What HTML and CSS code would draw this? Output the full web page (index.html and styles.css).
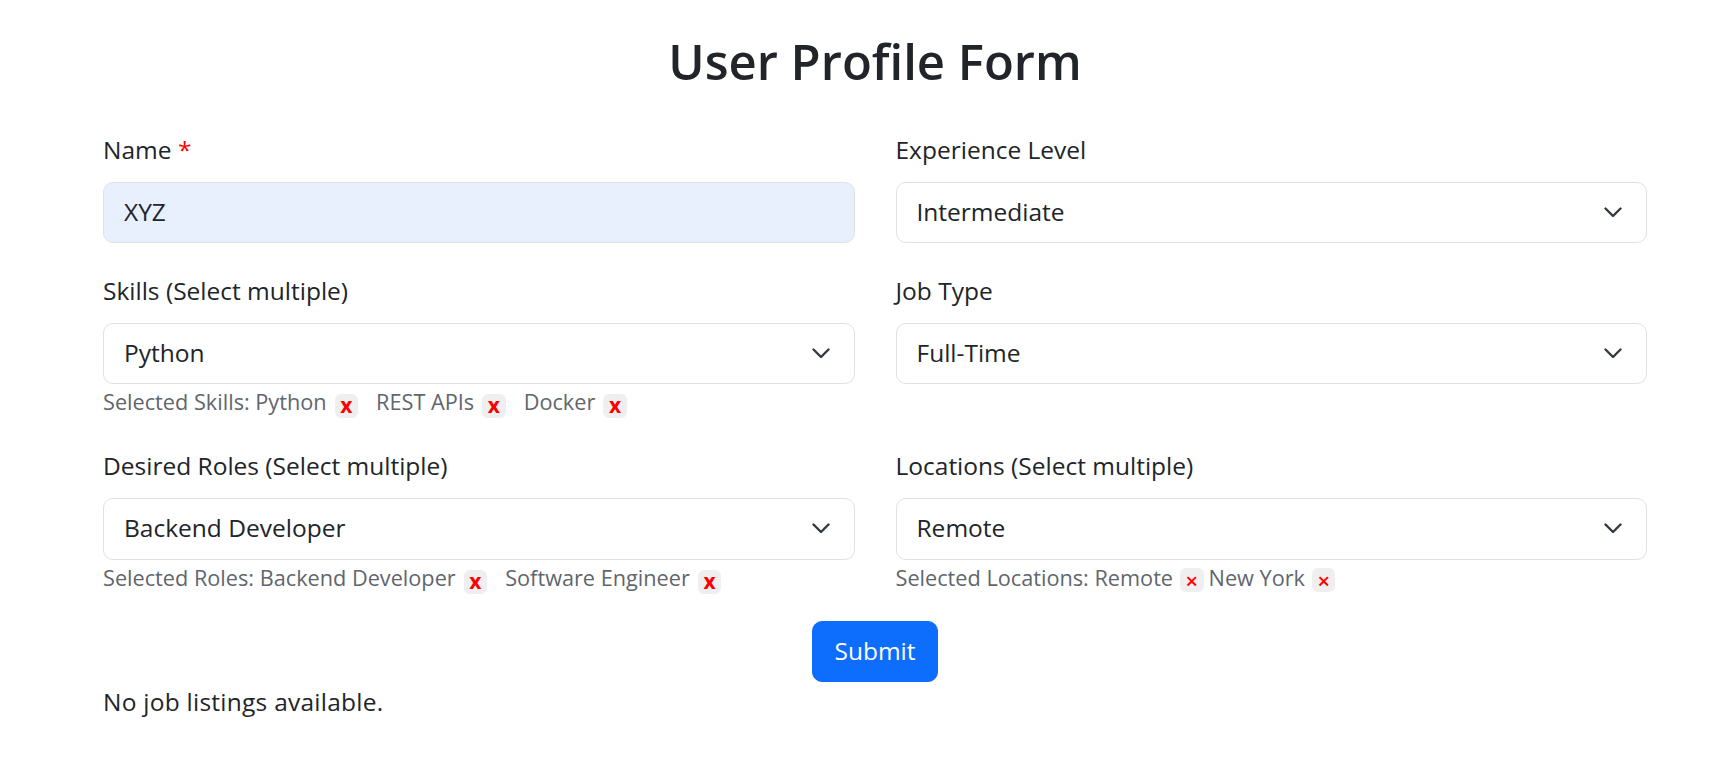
FILE: index.html
```html
<!DOCTYPE html>
<html lang="en">
<head>
<meta charset="utf-8">
<title>User Profile Form</title>
<link rel="stylesheet" href="styles.css">
</head>
<body>
<main class="page">
  <h1 class="title">User Profile Form</h1>
  <form class="form">
    <div class="grid">
      <div class="field">
        <label class="label">Name <span class="req">*</span></label>
        <div class="control filled">XYZ</div>
      </div>
      <div class="field">
        <label class="label">Experience Level</label>
        <div class="control select"><span>Intermediate</span><svg class="chev" width="18" height="11" viewBox="0 0 18 11"><path d="M1.5 1.5 L9 9 L16.5 1.5" fill="none" stroke="#343a40" stroke-width="2.4" stroke-linecap="round" stroke-linejoin="round"/></svg></div>
      </div>
      <div class="field">
        <label class="label">Skills (Select multiple)</label>
        <div class="control select"><span>Python</span><svg class="chev" width="18" height="11" viewBox="0 0 18 11"><path d="M1.5 1.5 L9 9 L16.5 1.5" fill="none" stroke="#343a40" stroke-width="2.4" stroke-linecap="round" stroke-linejoin="round"/></svg></div>
        <div class="help">Selected Skills: <span class="tag">Python<span class="x">x</span></span><span class="tag">REST APIs<span class="x">x</span></span><span class="tag">Docker<span class="x">x</span></span></div>
      </div>
      <div class="field">
        <label class="label">Job Type</label>
        <div class="control select"><span>Full-Time</span><svg class="chev" width="18" height="11" viewBox="0 0 18 11"><path d="M1.5 1.5 L9 9 L16.5 1.5" fill="none" stroke="#343a40" stroke-width="2.4" stroke-linecap="round" stroke-linejoin="round"/></svg></div>
      </div>
      <div class="field">
        <label class="label">Desired Roles (Select multiple)</label>
        <div class="control select"><span>Backend Developer</span><svg class="chev" width="18" height="11" viewBox="0 0 18 11"><path d="M1.5 1.5 L9 9 L16.5 1.5" fill="none" stroke="#343a40" stroke-width="2.4" stroke-linecap="round" stroke-linejoin="round"/></svg></div>
        <div class="help">Selected Roles: <span class="tag">Backend Developer<span class="x">x</span></span><span class="tag">Software Engineer<span class="x">x</span></span></div>
      </div>
      <div class="field">
        <label class="label">Locations (Select multiple)</label>
        <div class="control select"><span>Remote</span><svg class="chev" width="18" height="11" viewBox="0 0 18 11"><path d="M1.5 1.5 L9 9 L16.5 1.5" fill="none" stroke="#343a40" stroke-width="2.4" stroke-linecap="round" stroke-linejoin="round"/></svg></div>
        <div class="help">Selected Locations: <span class="tag loc">Remote<span class="x thin">×</span></span><span class="tag loc">New York<span class="x thin">×</span></span></div>
      </div>
    </div>
    <div class="actions"><button type="button" class="btn">Submit</button></div>
  </form>
  <p class="empty">No job listings available.</p>
</main>
</body>
</html>
```
FILE: styles.css
```css
* { box-sizing: border-box; }
html, body { margin: 0; padding: 0; background: #fff; }
body {
  font-family: "Open Sans", "Noto Sans", sans-serif;
  color: #212529;
  font-size: 24.5px;
  line-height: 1.5;
}
.page {
  padding: 32px 79px 0 103px;
}
.title {
  margin: 0 0 41px;
  font-size: 49px;
  font-weight: 600;
  line-height: 1.2;
  text-align: center;
  color: #212529;
}
.grid {
  display: grid;
  grid-template-columns: 1fr 1fr;
  column-gap: 41px;
  row-gap: 30px;
  align-items: start;
}
.field { display: flex; flex-direction: column; }
.label {
  display: block;
  margin-bottom: 13px;
  font-size: 24.5px;
  line-height: 1.5;
}
.req { color: #ff0000; }
.control {
  height: 61.5px;
  border: 1px solid #dee2e6;
  border-radius: 10px;
  padding: 0 20px;
  display: flex;
  align-items: center;
  font-size: 24.5px;
  color: #212529;
  background: #fff;
}
.control.filled { background: #e8f0fe; }
.select { justify-content: space-between; padding-right: 24px; }
.chev { display: block; flex: none; }
.help {
  margin-top: 2px;
  font-size: 21.7px;
  line-height: 32px;
  color: #5f666d;
  white-space: nowrap;
}
.tag { display: inline-block; margin-right: 18px; }
.tag.loc { margin-right: 5px; }
.x {
  display: inline-block;
  margin-left: 8px;
  width: 23.5px;
  height: 24px;
  line-height: 22px;
  text-align: center;
  background: #efefef;
  border-radius: 6px;
  color: #ff0000;
  font-weight: 700;
  font-size: 21px;
  vertical-align: -3px;
}
.x.thin { font-weight: 600; font-size: 22px; margin-left: 7px; line-height: 24px; }
.actions { display: flex; justify-content: center; margin-top: 27.5px; }
.btn {
  font-family: inherit;
  font-size: 24.5px;
  line-height: 1.5;
  padding: 11px 21px;
  color: #fff;
  background: #0d6efd;
  border: 1px solid #0d6efd;
  border-radius: 10px;
}
.empty { margin: 2px 0 0; font-size: 24.5px; line-height: 1.5; letter-spacing: 0.25px; }
```
